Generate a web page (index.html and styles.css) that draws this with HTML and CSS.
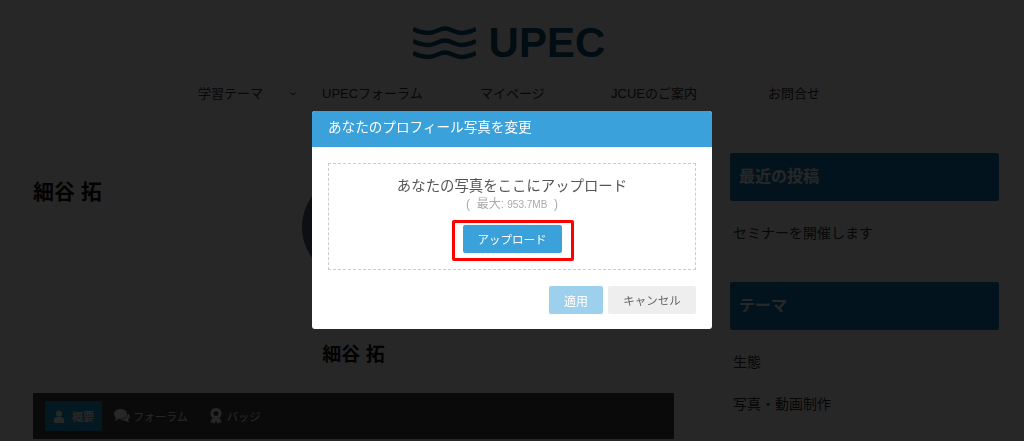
FILE: index.html
```html
<!DOCTYPE html>
<html lang="ja">
<head>
    <meta charset="UTF-8">
    <meta name="viewport" content="width=device-width, initial-scale=1.0">
    <title>UPEC</title>
    <link rel="stylesheet" href="styles.css">
</head>
<body>
    <header class="site-header">
        <div class="logo">
            <svg class="logo-waves" width="63" height="36" viewBox="0 0 63 36">
                <path d="M0 4C5 6.500 11 8 16 8 22 8 26 3.500 32 3.500 38 3.500 42 8 48 8 53 8 58 6.500 63 4"/>
                <path d="M0 16C5 18.500 11 20 16 20 22 20 26 15.500 32 15.500 38 15.500 42 20 48 20 53 20 58 18.500 63 16"/>
                <path d="M0 28C5 30.500 11 32 16 32 22 32 26 27.500 32 27.500 38 27.500 42 32 48 32 53 32 58 30.500 63 28"/>
            </svg>
            <span class="logo-text">UPEC</span>
        </div>
        <nav class="main-nav">
            <a class="nav-item nav-theme">学習テーマ</a>
            <span class="nav-caret">
                <svg width="6" height="4" viewBox="0 0 6 4"><path d="M.5.5 3 3 5.500.5"/></svg>
            </span>
            <a class="nav-item nav-forum">UPECフォーラム</a>
            <a class="nav-item nav-mypage">マイページ</a>
            <a class="nav-item nav-jcue">JCUEのご案内</a>
            <a class="nav-item">お問合せ</a>
        </nav>
    </header>

    <div class="page">
        <main class="content">
            <h1 class="page-title">細谷 拓</h1>
            <div class="avatar"></div>
            <h2 class="profile-name">細谷 拓</h2>
            <div class="tabs">
                <a class="tab tab-active">
                    <svg width="12" height="13" viewBox="0 0 14 15"><circle cx="7" cy="4" r="3.600"/><path d="M1 15V11.500Q1 8.500 4 8H10Q13 8.500 13 11.500V15Z"/></svg>
                    概要
                </a>
                <a class="tab tab-forum">
                    <svg width="16" height="14" viewBox="0 0 16 14"><ellipse cx="6.500" cy="5" rx="6.500" ry="5"/><path d="M2 8 1 12 6 9Z"/><path d="M14 4.500Q16 6 15.500 8.500 15 10 14 10.500L15 13.500 10.500 11.500Q8 11.500 6.500 10.500 13 10.500 14 4.500Z"/></svg>
                    フォーラム
                </a>
                <a class="tab tab-badge">
                    <svg width="14" height="16" viewBox="0 0 14 16"><path fill-rule="evenodd" d="M7 0A5.500 5.500 0 1 1 7 11 5.500 5.500 0 1 1 7 0ZM7 3A2.500 2.500 0 1 0 7 8 2.500 2.500 0 1 0 7 3Z"/><path d="M3 10.500 1.500 15 4 14.500 5.500 16 7 12 8.500 16 10 14.500 12.500 15 11 10.500Z"/></svg>
                    バッジ
                </a>
            </div>
        </main>
        <aside class="sidebar">
            <h3 class="widget-title">最近の投稿</h3>
            <ul class="widget-list">
                <li>セミナーを開催します</li>
            </ul>
            <h3 class="widget-title">テーマ</h3>
            <ul class="widget-list">
                <li>生態</li>
                <li>写真・動画制作</li>
            </ul>
        </aside>
    </div>

    <div class="overlay">
        <div class="modal">
            <div class="modal-header">あなたのプロフィール写真を変更</div>
            <div class="modal-body">
                <div class="dropzone">
                    <div class="drop-title">あなたの写真をここにアップロード</div>
                    <div class="drop-limit">(&nbsp; 最大: <span class="drop-size">953.7MB</span> &nbsp;)</div>
                    <div class="upload-wrap">
                        <button class="btn btn-primary">アップロード</button>
                    </div>
                </div>
                <div class="modal-actions">
                    <button class="btn btn-apply">適用</button>
                    <button class="btn btn-cancel">キャンセル</button>
                </div>
            </div>
        </div>
    </div>
</body>
</html>
```

FILE: styles.css
```css
* {
    box-sizing: border-box;
}

html, body {
    height: 441px;
    overflow: hidden;
}

body {
    margin: 0;
    background-color: #fff;
    color: #222;
    font-family: "Liberation Sans", "Noto Sans CJK JP", sans-serif;
}

.site-header {
    padding-top: 25px;
}

.logo {
    display: flex;
    justify-content: center;
    align-items: center;
    gap: 12px;
    height: 36px;
    padding-right: 5px;
}

.logo-waves path {
    fill: none;
    stroke: #0d4f7c;
    stroke-width: 4.500;
}

.logo-text {
    font-size: 42px;
    font-weight: bold;
    line-height: 36px;
    color: #0d4f7c;
    letter-spacing: 0.1px;
}

.main-nav {
    display: flex;
    align-items: center;
    height: 20px;
    margin-top: 21px;
    padding-left: 198px;
    font-size: 13px;
    color: #333;
}

.nav-item {
    white-space: nowrap;
}

.nav-theme {
    width: 92px;
}

.nav-caret {
    display: flex;
    width: 32px;
    padding-top: 3px;
}

.nav-caret path {
    fill: none;
    stroke: #333;
}

.nav-forum {
    width: 158px;
}

.nav-mypage {
    width: 131px;
}

.nav-jcue {
    width: 157px;
}

.page {
    display: flex;
    align-items: flex-start;
    padding: 51px 25px 0 33px;
}

.content {
    width: 641px;
    margin-right: 56px;
}

.page-title {
    margin: 29px 0 0;
    font-size: 21px;
    line-height: 20px;
    color: #111;
}

.avatar {
    width: 104px;
    height: 104px;
    margin: -27px auto 0;
    border-radius: 50%;
    background-color: #4d6a80;
}

.profile-name {
    margin: 66px 0 0;
    font-size: 19px;
    line-height: 20px;
    text-align: center;
    color: #111;
}

.tabs {
    display: flex;
    align-items: center;
    gap: 12px;
    height: 46px;
    margin-top: 28px;
    padding-left: 12px;
    background-color: #444;
    color: #fff;
    font-size: 11px;
}

.tab {
    display: flex;
    align-items: center;
    height: 30px;
}

.tab svg {
    fill: #fff;
}

.tab-active {
    width: 57px;
    gap: 7px;
    padding-left: 8px;
    border-radius: 3px;
    background-color: #1f9bd8;
    font-weight: bold;
}

.tab-forum {
    gap: 3px;
    margin-right: 9px;
}

.tab-badge {
    gap: 4px;
    font-size: 11.300px;
}

.sidebar {
    width: 269px;
}

.widget-title {
    height: 48px;
    margin: 0;
    padding-left: 9px;
    border-radius: 2px;
    background-color: #147fbb;
    color: #fff;
    font-size: 16px;
    line-height: 48px;
}

.widget-list {
    height: 81px;
    margin: 0;
    padding: 22px 0 0 3px;
    list-style: none;
    font-size: 14px;
    line-height: 20px;
    color: #333;
}

.widget-list li + li {
    margin-top: 22px;
}

.overlay {
    position: fixed;
    inset: 0;
    display: flex;
    justify-content: center;
    align-items: center;
    background-color: rgba(0, 0, 0, 0.847);
}

.modal {
    width: 400px;
    height: 218px;
    margin-bottom: 1px;
    overflow: hidden;
    border-radius: 3px;
    background-color: #fff;
}

.modal-header {
    height: 36px;
    padding-left: 16px;
    background-color: #3ba1da;
    color: #fff;
    font-size: 13.600px;
    line-height: 33px;
}

.modal-body {
    padding: 16px;
}

.dropzone {
    height: 107px;
    padding-top: 12px;
    border: 1px dashed #ccc;
    text-align: center;
}

.drop-title {
    font-size: 14.400px;
    line-height: 20px;
    color: #555;
}

.drop-limit {
    font-size: 12px;
    line-height: 16px;
    color: #aaa;
}

.drop-size {
    font-size: 10px;
}

.upload-wrap {
    position: relative;
    width: 99px;
    margin: 12px auto 0;
}

/* red mark around the button */
.upload-wrap::after {
    content: "";
    position: absolute;
    top: -5px;
    right: -12px;
    bottom: -8px;
    left: -11px;
    border: 3px solid #f00;
    border-radius: 2px;
}

.btn {
    display: block;
    height: 28px;
    padding: 0;
    border: none;
    border-radius: 2px;
    font-family: inherit;
    font-size: 11.500px;
}

.btn-primary {
    width: 99px;
    background-color: #3ba1da;
    color: #fff;
}

.modal-actions {
    display: flex;
    justify-content: flex-end;
    gap: 5px;
    margin-top: 16px;
}

.btn-apply {
    width: 54px;
    background-color: #9dd0ed;
    color: #fff;
    font-size: 12px;
}

.btn-cancel {
    width: 88px;
    background-color: #eee;
    color: #666;
}
```
